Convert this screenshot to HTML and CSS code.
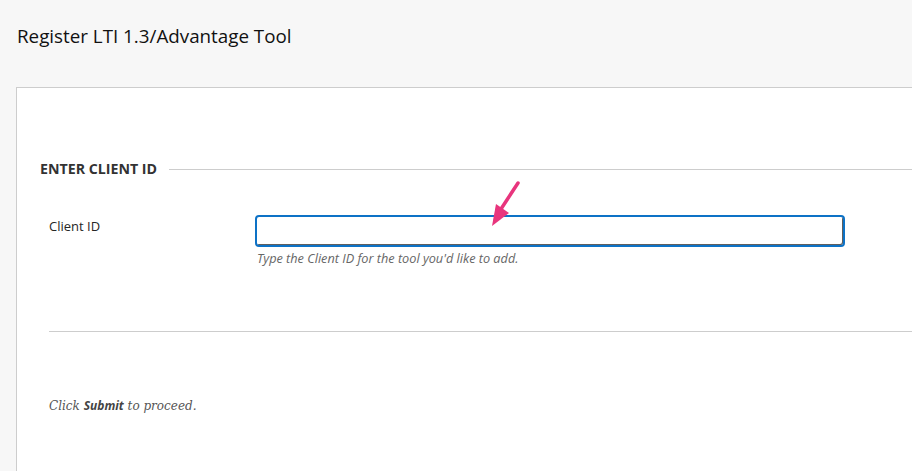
FILE: index.html
```html
<!DOCTYPE html>
<html>
<head>
<meta charset="utf-8">
<link rel="stylesheet" href="styles.css">
</head>
<body>
<header class="page-header">
  <h1 class="page-title">Register LTI 1.3/Advantage Tool</h1>
</header>
<main class="panel">
  <section class="step">
    <h2 class="step-title"><span>ENTER CLIENT ID</span></h2>
    <div class="field-row">
      <label class="field-label" for="clientId">Client ID</label>
      <div class="field-control">
        <input id="clientId" class="text-input" type="text">
        <p class="hint">Type the Client ID for the tool you'd like to add.</p>
      </div>
    </div>
  </section>
  <div class="divider"></div>
  <p class="submit-note">Click <strong>Submit</strong> to proceed.</p>
  <svg class="callout-arrow" width="40" height="50" viewBox="0 0 40 50">
    <line x1="31" y1="4" x2="14" y2="30" stroke="#e8357d" stroke-width="3.5" stroke-linecap="round"/>
    <polygon points="5,47 9,25 22,34" fill="#e8357d"/>
  </svg>
</main>
</body>
</html>
```
FILE: styles.css
```css
* { box-sizing: border-box; }
html, body { margin: 0; padding: 0; }
body {
  background: #f7f7f7;
  font-family: "Open Sans", "Noto Sans", sans-serif;
  color: #262626;
  height: 471px;
  overflow: hidden;
}
.page-header {
  height: 87px;
  padding: 23px 17px 0;
}
.page-title {
  margin: 0;
  font-size: 18.8px;
  font-weight: 400;
  line-height: 27px;
  color: #111;
}
.panel {
  position: relative;
  margin-left: 16px;
  background: #fff;
  border-left: 1px solid #cdcdcd;
  border-top: 1px solid #cdcdcd;
  height: 384px;
  padding-top: 70px;
}
.step-title {
  display: flex;
  align-items: center;
  margin: 0 0 0 23px;
  font-size: 14.2px;
  font-weight: 700;
  line-height: 22px;
  color: #333;
}
.step-title::after {
  content: "";
  flex: 1;
  height: 1px;
  background: #cdcdcd;
  margin-left: 12px;
}
.field-row {
  display: flex;
  margin-top: 35px;
  padding-left: 32px;
}
.field-label {
  width: 206px;
  font-size: 13px;
  line-height: 18px;
  padding-top: 2px;
  color: #262626;
}
.field-control { display: flex; flex-direction: column; }
.text-input {
  width: 590px;
  height: 32px;
  border: 2px solid #0d72c6;
  border-radius: 4px;
  box-shadow: inset -1px -1px 0 #5f5f5f;
  outline: none;
  background: #fff;
}
.hint {
  margin: 3px 0 0 2px;
  font-size: 12.7px;
  font-style: italic;
  line-height: 16px;
  color: #666;
}
.divider {
  margin: 65px 0 0 32px;
  height: 1px;
  background: #cdcdcd;
}
.submit-note {
  margin: 66px 0 0 32px;
  font-family: "DejaVu Serif", "Liberation Serif", serif;
  font-style: italic;
  font-size: 12px;
  line-height: 16px;
  color: #555;
}
.submit-note strong {
  font-family: "Open Sans", sans-serif;
  font-weight: 700;
  color: #444;
}
.callout-arrow {
  position: absolute;
  left: 470px;
  top: 91px;
}
```
